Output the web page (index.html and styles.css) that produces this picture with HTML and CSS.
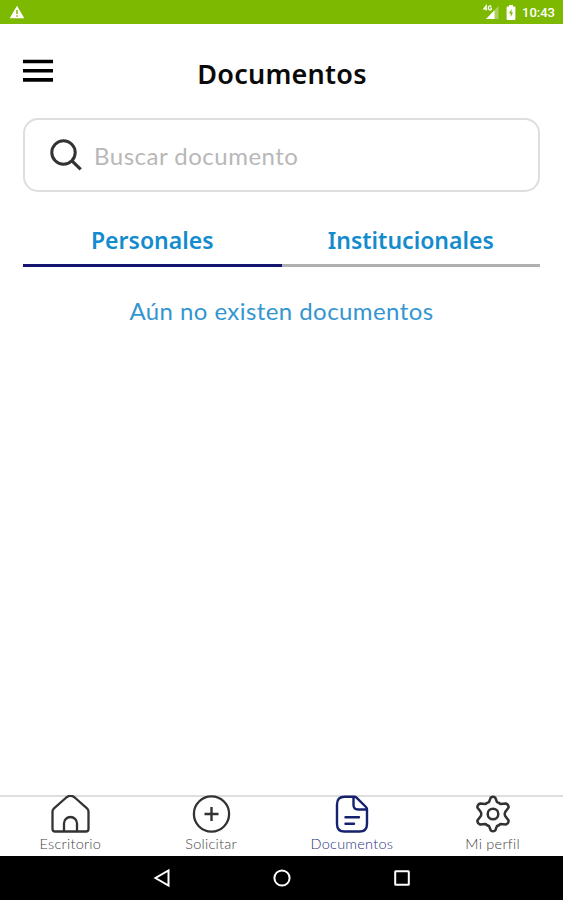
FILE: index.html
```html
<!DOCTYPE html>
<html lang="es">
<head>
<meta charset="utf-8">
<title>Documentos</title>
<link rel="stylesheet" href="styles.css">
</head>
<body>
<header class="status">
  <svg class="warn" width="16" height="14" viewBox="0 0 16 14"><path d="M8 .7 15.3 13.3H.7Z" fill="#fff"/><path d="M8 5v4M8 10.2v1.6" stroke="#7db900" stroke-width="1.5"/></svg>
  <div class="status-right">
    <svg width="18" height="16" viewBox="0 0 18 16"><path d="M16.5 2v13H4Z" fill="#fff" opacity=".35"/><path d="M12.500 6.2V15H4Z" fill="#fff"/><path d="M4.200 6.500V1.700L1.800 4.900h3.400M9.300 2.500C7.800 1.300 6.400 2.200 6.400 3.900S8 6.500 9.300 5.500V4H8.200" fill="none" stroke="#fff" stroke-width="1.200"/></svg>
    <svg class="battery" width="10" height="15" viewBox="0 0 10 15"><path d="M3 0h4v1.5h1.4q1 0 1 1V14q0 1-1 1H1.6q-1 0-1-1V2.500q0-1 1-1H3Z" fill="#fff"/><path d="M5.500 4 3 8.500h1.700V12L7 7.500H5.500Z" fill="#7db900"/></svg>
    <span class="clock">10:43</span>
  </div>
</header>
<main>
  <div class="titlebar">
    <svg class="menu" width="30" height="24" viewBox="0 0 30 24"><path d="M0 2.500h30M0 11.700h30M0 20.900h30" stroke="#000" stroke-width="3.600"/></svg>
    <h1>Documentos</h1>
  </div>
  <div class="search">
    <svg width="32" height="32" viewBox="0 0 32 32" fill="none" stroke="#333"><circle cx="13.500" cy="13.500" r="11.700" stroke-width="3"/><path d="m21.700 21.700 9 8.700" stroke-width="3.200"/></svg>
    <span>Buscar documento</span>
  </div>
  <div class="tabs">
    <div class="tab active">Personales</div>
    <div class="tab">Institucionales</div>
  </div>
  <p class="empty">Aún no existen documentos</p>
</main>
<nav class="bottom">
  <div class="item">
    <svg width="40" height="38" viewBox="-.5 0 40 38" fill="none" stroke="#333" stroke-width="2.300" stroke-linejoin="round"><path d="M2 16.500q0-1.800 1.500-3.200L15.800 2.500q4.200-3.400 8.400 0l12.300 10.800Q38 14.700 38 16.500V34q0 2.500-2.500 2.500h-31Q2 36.500 2 34Z"/><path d="M13.500 36.500v-8a6.500 6.500 0 0 1 13 0v8"/></svg>
    <span>Escritorio</span>
  </div>
  <div class="item">
    <svg width="40" height="38" viewBox="-.5 0 40 38" fill="none" stroke="#333"><circle cx="20" cy="19" r="17.600" stroke-width="2.300"/><path d="M20 12v14M13 19h14" stroke-width="2.400"/></svg>
    <span>Solicitar</span>
  </div>
  <div class="item current">
    <svg width="40" height="38" viewBox="0 0 40 38" fill="none" stroke="#15206f" stroke-width="2.400" stroke-linejoin="round" stroke-linecap="round"><path d="M22 1.700H12.500q-7.500 0-7.500 7.500V29q0 7.500 7.500 7.500h15q7.500 0 7.500-7.500V14.500Q35 13 34 12L24.500 2.700Q23.500 1.700 22 1.700Z"/><path d="M21.500 2v8q0 4.500 4.500 4.500h8.500M13.500 22.300h13.500M13.500 28.800h8.500"/></svg>
    <span>Documentos</span>
  </div>
  <div class="item">
    <svg width="40" height="38" viewBox="-20 -19 40 38" fill="none" stroke="#333" stroke-width="2.500" stroke-linejoin="round"><path d="M-2.200-16.500Q0-18 2.200-16.500L4-12Q6-11.500 7.500-10L12.800-10.500Q15.800-9.300 15.600-6.600L12.200-2Q11.300 0 12.200 2L15.600 6.600Q15.800 9.300 12.800 10.500L7.500 10Q6 11.500 4 12L2.200 16.500Q0 18-2.200 16.500L-4 12Q-6 11.500-7.500 10L-12.800 10.500Q-15.800 9.300-15.600 6.600L-12.200 2Q-11.300 0-12.200-2L-15.600-6.600Q-15.800-9.300-12.800-10.500L-7.500-10Q-6-11.500-4-12Z"/><circle r="5.300"/></svg>
    <span>Mi perfil</span>
  </div>
</nav>
<footer class="system">
  <svg width="18" height="20" viewBox="0 0 18 20"><path d="M15.500 2.500v15L2.500 10Z" fill="none" stroke="#fff" stroke-width="2"/></svg>
  <svg width="20" height="20" viewBox="0 0 20 20"><circle cx="10" cy="10" r="7.600" fill="none" stroke="#fff" stroke-width="2"/></svg>
  <svg width="18" height="20" viewBox="0 0 18 20"><rect x="2.200" y="3.200" width="13.600" height="13.600" rx=".5" fill="none" stroke="#fff" stroke-width="2"/></svg>
</footer>
</body>
</html>
```
FILE: styles.css
```css
* { box-sizing: border-box; }
body {
  margin: 0;
  height: 900px;
  display: flex;
  flex-direction: column;
  background: #fff;
  font-family: Lato, sans-serif;
  overflow: hidden;
}
svg { display: block; flex: none; }
.status {
  height: 23.5px;
  flex: none;
  background: #7db900;
  display: flex;
  align-items: center;
  justify-content: space-between;
  padding: 1px 8px 0 9px;
}
.status-right { display: flex; align-items: center; }
.battery { margin-left: 6px; }
.clock { margin: 2px 0 0 6px; color: #fff; font: 500 13px/16px Roboto, sans-serif; }
main { flex: 1; padding: 0 23px; }
.titlebar { height: 94.5px; display: flex; align-items: center; }
h1 {
  flex: 1;
  margin: 6px 29px 0 0;
  text-align: center;
  font: 600 27px/36px "Noto Sans", sans-serif;
  letter-spacing: .25px;
  color: #0a0a0a;
  white-space: nowrap;
}
.search {
  height: 74px;
  border: 2px solid #dedede;
  border-radius: 15px;
  display: flex;
  align-items: center;
  gap: 12px;
  padding-left: 25px;
  color: #b8b8b8;
  font-size: 24px;
  letter-spacing: .5px;
}
.tabs { display: flex; margin-top: 25px; }
.tab {
  flex: 1;
  height: 50px;
  text-align: center;
  border-bottom: 3px solid #b0b0b0;
  color: #138bcd;
  font: 600 23px/46px "Noto Sans", sans-serif;
}
.active { border-color: #15156f; }
.empty {
  margin: 28px 0 0;
  text-align: center;
  color: #3496d0;
  font-size: 24px;
  line-height: 32px;
  letter-spacing: .43px;
}
.bottom {
  height: 61px;
  flex: none;
  display: flex;
  border-top: 2px solid #dedede;
  color: #444;
  font-size: 14.5px;
  font-weight: 300;
  letter-spacing: .25px;
}
.item { flex: 1; display: flex; flex-direction: column; align-items: center; line-height: 18px; }
.item svg { margin-top: -2px; }
.item span { margin-top: 2px; }
.current { color: #26327d; }
.system {
  height: 44px;
  flex: none;
  background: #000;
  display: flex;
  justify-content: center;
  align-items: center;
  gap: 101px;
}
```
